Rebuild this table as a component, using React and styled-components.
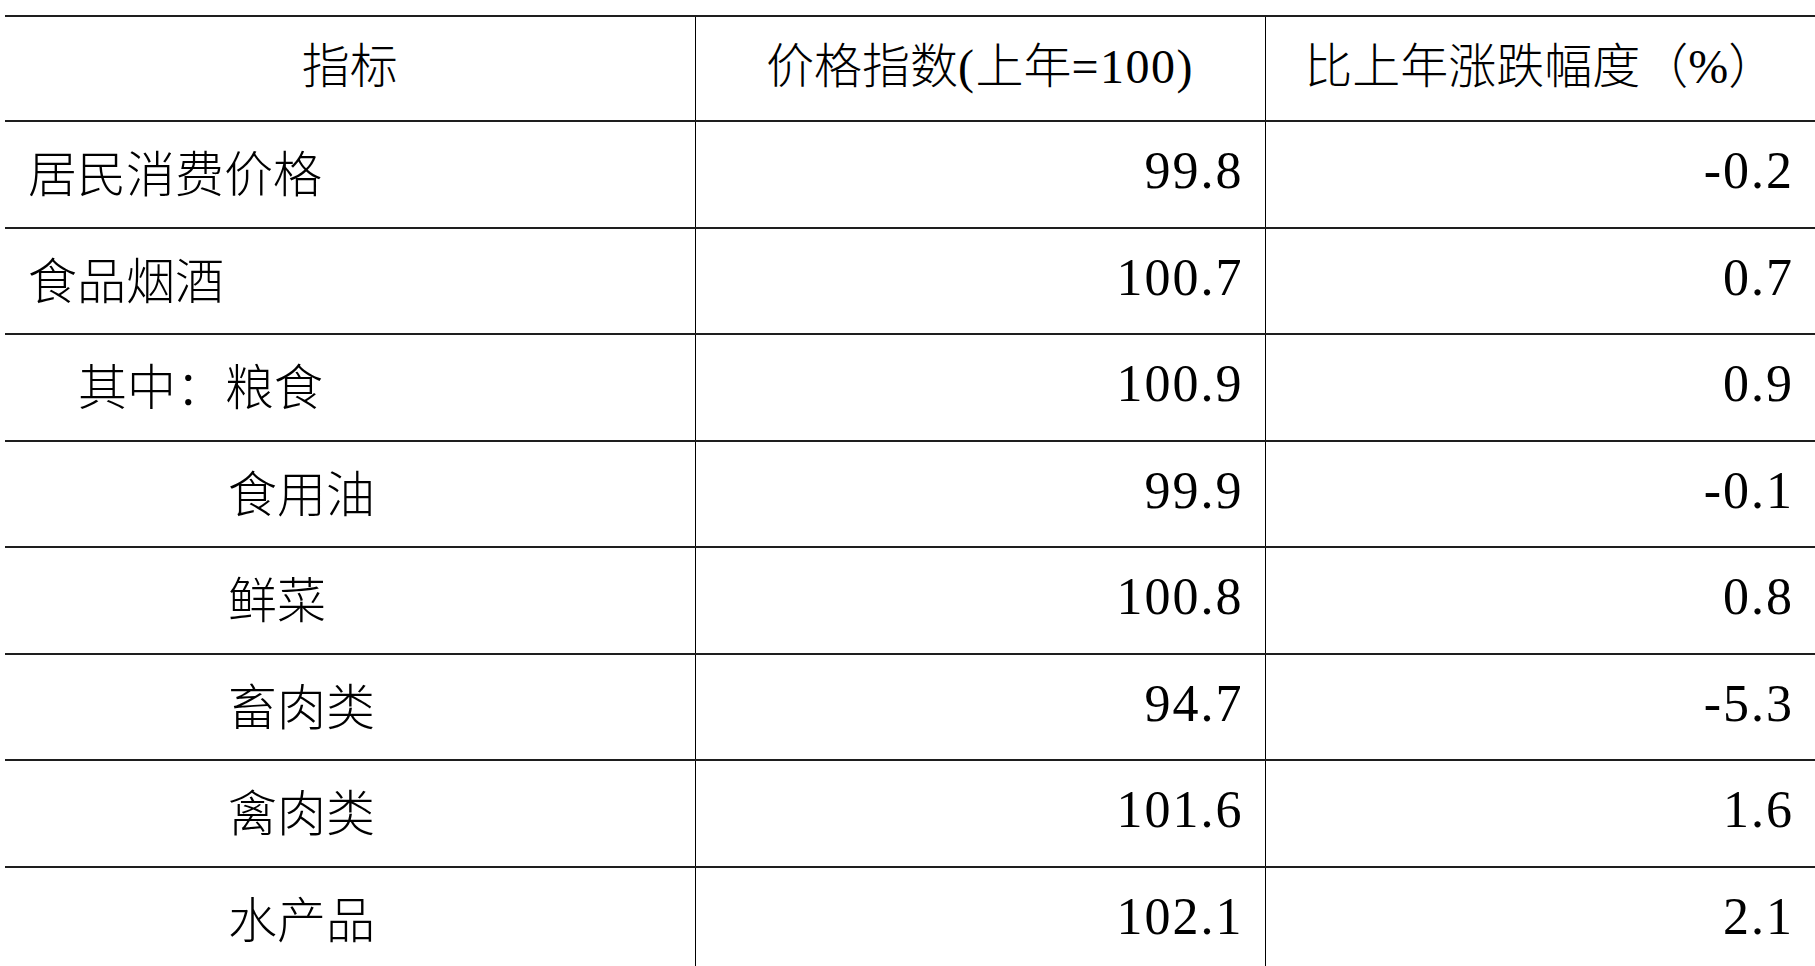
import styled, { createGlobalStyle } from 'styled-components';

const GlobalStyle = createGlobalStyle`
  html, body {
    margin: 0;
    background: #fff;
  }
  body {
    font-family: "Liberation Serif", "Noto Sans CJK SC", serif;
    color: #000;
  }
`;

const Page = styled.div`
  box-sizing: border-box;
  height: 966px;
  padding: 15px 0 0 5px;
  overflow: hidden;
`;

const Table = styled.table`
  width: 1810px;
  table-layout: fixed;
  border-collapse: collapse;
  border-top: 2px solid #1e1e1e;
`;

const HeadRow = styled.tr`
  height: 105px;
`;

const Row = styled.tr`
  height: 106.5px;
`;

const HeadCell = styled.th`
  padding: 0 0 13px;
  font-size: 48px;
  font-weight: 300;
  text-align: center;
  vertical-align: middle;
  white-space: nowrap;
  border-bottom: 2px solid #1e1e1e;
  & + & {
    border-left: 1px solid #000;
  }
`;

const Ascii = styled.span`
  letter-spacing: 1.5px;
`;

const Cell = styled.td`
  padding: ${p => (p.$num ? '0 21px 7px 0' : `0 0 7px ${23 + (p.$indent || 0) * 50}px`)};
  font-size: ${p => (p.$num ? '52px' : '49px')};
  font-weight: 300;
  letter-spacing: ${p => (p.$num ? '2px' : '0')};
  text-align: ${p => (p.$num ? 'right' : 'left')};
  vertical-align: middle;
  white-space: nowrap;
  border-bottom: 2px solid #1e1e1e;
  & + & {
    border-left: 1px solid #000;
  }
`;

const rows = [
  { name: '居民消费价格', indent: 0, index: '99.8', change: '-0.2' },
  { name: '食品烟酒', indent: 0, index: '100.7', change: '0.7' },
  { name: '其中：粮食', indent: 1, index: '100.9', change: '0.9' },
  { name: '食用油', indent: 4, index: '99.9', change: '-0.1' },
  { name: '鲜菜', indent: 4, index: '100.8', change: '0.8' },
  { name: '畜肉类', indent: 4, index: '94.7', change: '-5.3' },
  { name: '禽肉类', indent: 4, index: '101.6', change: '1.6' },
  { name: '水产品', indent: 4, index: '102.1', change: '2.1' },
];

const App = () => {
  return (
    <>
      <GlobalStyle />
      <Page>
        <Table>
          <colgroup>
            <col style={{ width: 690 }} />
            <col style={{ width: 570 }} />
            <col style={{ width: 550 }} />
          </colgroup>
          <thead>
            <HeadRow>
              <HeadCell>指标</HeadCell>
              <HeadCell>
                价格指数<Ascii>(</Ascii>上年<Ascii>=100)</Ascii>
              </HeadCell>
              <HeadCell>比上年涨跌幅度（%）</HeadCell>
            </HeadRow>
          </thead>
          <tbody>
            {rows.map(r => (
              <Row key={r.name}>
                <Cell $indent={r.indent}>{r.name}</Cell>
                <Cell $num>{r.index}</Cell>
                <Cell $num>{r.change}</Cell>
              </Row>
            ))}
          </tbody>
        </Table>
      </Page>
    </>
  );
};

export default App;
